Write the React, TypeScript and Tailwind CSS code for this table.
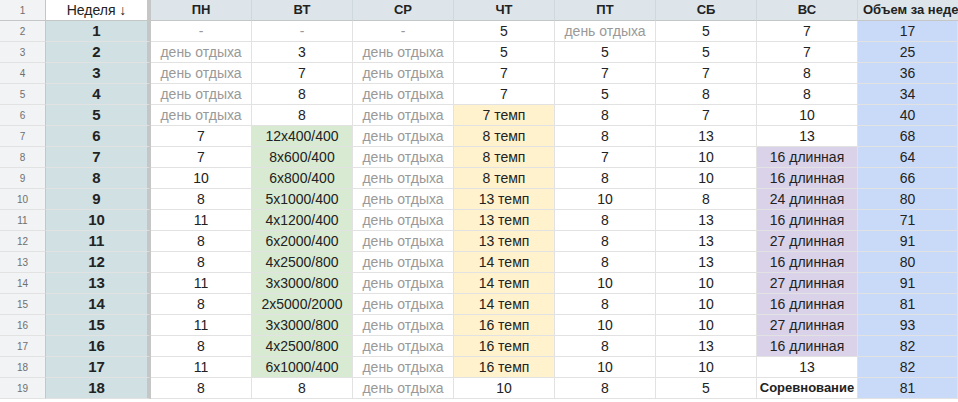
import React from "react";

type Cell = string | { v: string; c?: "g" | "y" | "p"; b?: boolean };

const REST = "день отдыха";

const rows: Cell[][] = [
  ["-", "-", "-", "5", REST, "5", "7", "17"],
  [REST, "3", REST, "5", "5", "5", "7", "25"],
  [REST, "7", REST, "7", "7", "7", "8", "36"],
  [REST, "8", REST, "7", "5", "8", "8", "34"],
  [REST, "8", REST, { v: "7 темп", c: "y" }, "8", "7", "10", "40"],
  ["7", { v: "12x400/400", c: "g" }, REST, { v: "8 темп", c: "y" }, "8", "13", "13", "68"],
  ["7", { v: "8x600/400", c: "g" }, REST, { v: "8 темп", c: "y" }, "7", "10", { v: "16 длинная", c: "p" }, "64"],
  ["10", { v: "6x800/400", c: "g" }, REST, { v: "8 темп", c: "y" }, "8", "10", { v: "16 длинная", c: "p" }, "66"],
  ["8", { v: "5x1000/400", c: "g" }, REST, { v: "13 темп", c: "y" }, "10", "8", { v: "24 длинная", c: "p" }, "80"],
  ["11", { v: "4x1200/400", c: "g" }, REST, { v: "13 темп", c: "y" }, "8", "13", { v: "16 длинная", c: "p" }, "71"],
  ["8", { v: "6x2000/400", c: "g" }, REST, { v: "13 темп", c: "y" }, "8", "13", { v: "27 длинная", c: "p" }, "91"],
  ["8", { v: "4x2500/800", c: "g" }, REST, { v: "14 темп", c: "y" }, "8", "13", { v: "16 длинная", c: "p" }, "80"],
  ["11", { v: "3x3000/800", c: "g" }, REST, { v: "14 темп", c: "y" }, "10", "10", { v: "27 длинная", c: "p" }, "91"],
  ["8", { v: "2x5000/2000", c: "g" }, REST, { v: "14 темп", c: "y" }, "8", "10", { v: "16 длинная", c: "p" }, "81"],
  ["11", { v: "3x3000/800", c: "g" }, REST, { v: "16 темп", c: "y" }, "10", "10", { v: "27 длинная", c: "p" }, "93"],
  ["8", { v: "4x2500/800", c: "g" }, REST, { v: "16 темп", c: "y" }, "8", "13", { v: "16 длинная", c: "p" }, "82"],
  ["11", { v: "6x1000/400", c: "g" }, REST, { v: "16 темп", c: "y" }, "10", "10", "13", "82"],
  ["8", "8", REST, "10", "8", "5", { v: "Соревнование", b: true }, "81"],
];

const days = ["ПН", "ВТ", "СР", "ЧТ", "ПТ", "СБ", "ВС"];

const fills = { g: "bg-[#d9ead3]", y: "bg-[#fff2cc]", p: "bg-[#d9d2e9]" };

function DataCell({ cell, last }: { cell: Cell; last?: boolean }) {
  const c = typeof cell === "string" ? { v: cell } : cell;
  const muted = c.v === REST || c.v === "-";
  const bg = last ? "bg-[#c9daf8]" : c.c ? fills[c.c] : "bg-white";
  return (
    <div
      className={`flex h-[21px] items-center justify-center overflow-hidden whitespace-nowrap border-b border-r border-[#e2e2e2] ${bg} ${
        muted ? "text-[#999999]" : "text-[#222222]"
      } ${c.b ? "text-[13px] font-bold" : ""}`}
    >
      {c.v}
    </div>
  );
}

export default function App() {
  return (
    <div className="h-[402px] w-[958px] overflow-hidden bg-white font-['Liberation_Sans',Arial,sans-serif] text-[14px]">
      <div className="grid grid-cols-[46px_105px_repeat(7,101px)_100px]">
        {/* header row */}
        <div className="flex h-[21px] items-center justify-center border-b border-r border-[#c4c7c5] bg-[#f1f3f4] text-[10px] text-[#6f6f6f]">
          1
        </div>
        <div className="flex h-[21px] items-center justify-center border-b border-r-4 border-[#c4c7c5] border-b-[#c4c7c5] bg-white text-[#222222]">
          Неделя ↓
        </div>
        {days.map((d) => (
          <div
            key={d}
            className="flex h-[21px] items-center justify-center border-b border-r border-b-[#c4c7c5] border-r-[#cfd8dd] bg-[#dde5ea] text-[13px] font-bold text-[#222222]"
          >
            {d}
          </div>
        ))}
        <div className="flex h-[21px] items-center overflow-hidden whitespace-nowrap border-b border-[#c4c7c5] bg-[#dde5ea] pl-[5px] text-[13px] font-bold text-[#222222]">
          Объем за неделю
        </div>

        {rows.map((r, i) => (
          <React.Fragment key={i}>
            <div className="flex h-[21px] items-center justify-center border-b border-r border-[#c4c7c5] border-b-[#e2e2e2] bg-[#f1f3f4] text-[10px] text-[#6f6f6f]">
              {i + 2}
            </div>
            <div className="flex h-[21px] items-center justify-center border-b border-r-4 border-b-[#e2e2e2] border-r-[#c4c7c5] bg-[#d0e0e3] text-[15px] font-bold text-[#222222]">
              {i + 1}
            </div>
            {r.map((cell, j) => (
              <DataCell key={j} cell={cell} last={j === r.length - 1} />
            ))}
          </React.Fragment>
        ))}
      </div>
    </div>
  );
}
